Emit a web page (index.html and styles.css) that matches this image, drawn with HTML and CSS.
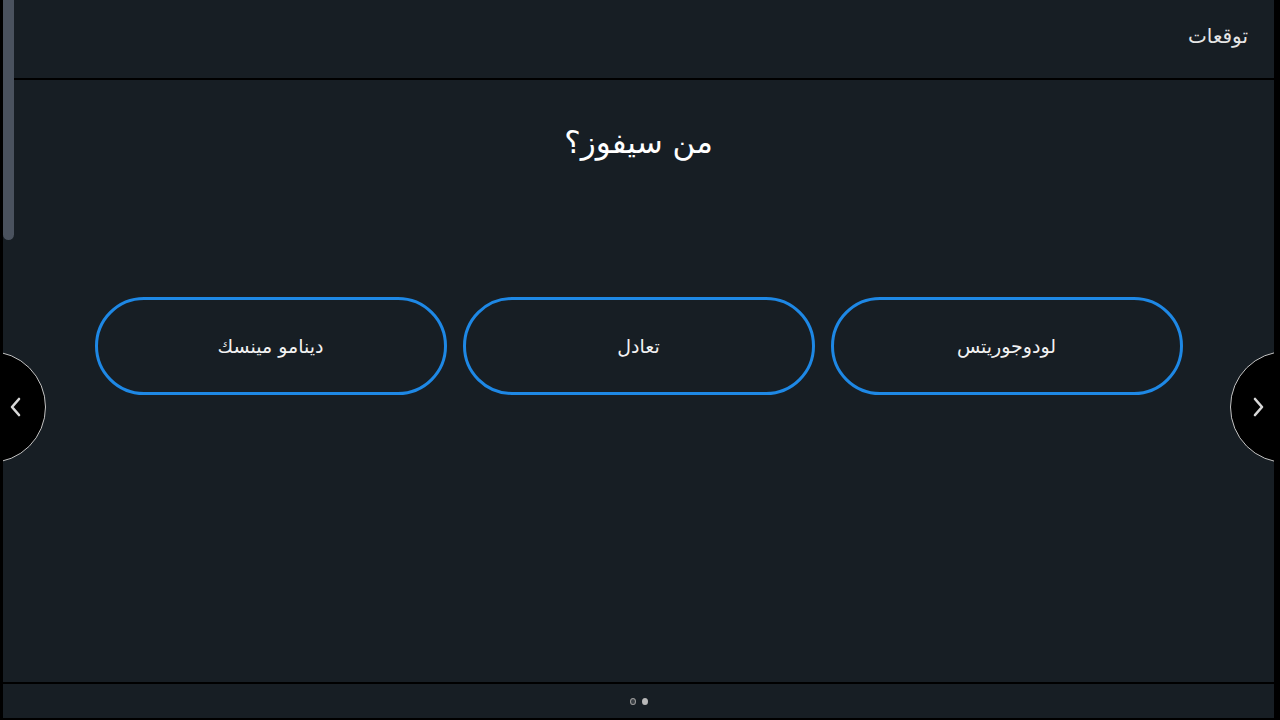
FILE: index.html
```
<!DOCTYPE html>
<html lang="ar" dir="rtl">
    <head>
    <title>توقعات</title>
    <meta charset="UTF-8">
    <meta name="viewport" content="width=device-width, initial-scale=1.0">
    <link rel="stylesheet" href="styles.css">
    </head>

    <body>
        <div class="pantalla">
            <div class="barra-scroll"></div>

            <div class="cabecera">
                <span class="titulo">توقعات</span>
            </div>

            <div class="contenido">
                <h1 class="pregunta">من سيفوز؟</h1>
                <div class="opciones">
                    <button class="opcion">لودوجوريتس</button>
                    <button class="opcion">تعادل</button>
                    <button class="opcion">دينامو مينسك</button>
                </div>
            </div>

            <div class="pie">
                <span class="punto punto-hueco"></span>
                <span class="punto"></span>
            </div>

            <button class="flecha flecha-izq">
                <svg width="14" height="22" viewBox="0 0 14 22"><path d="M11 3 L4 11 L11 19" fill="none" stroke="#d8d8d8" stroke-width="2.6" stroke-linecap="round" stroke-linejoin="round"/></svg>
            </button>
            <button class="flecha flecha-der">
                <svg width="14" height="22" viewBox="0 0 14 22"><path d="M3 3 L10 11 L3 19" fill="none" stroke="#d8d8d8" stroke-width="2.6" stroke-linecap="round" stroke-linejoin="round"/></svg>
            </button>
        </div>
    </body>
</html>
```

FILE: styles.css
```
html, body{
    margin: 0;
    height: 100%;
}

body{
    background-color: #000;
    padding: 0 6px 2px 3px;
    box-sizing: border-box;
    font-family: "DejaVu Sans", sans-serif;
}

.pantalla{
    position: relative;
    height: 100%;
    display: flex;
    flex-direction: column;
    background-color: #171e24;
    overflow: hidden;
}

.barra-scroll{
    position: absolute;
    left: 0;
    top: 0;
    width: 11px;
    height: 240px;
    background-color: #4a525e;
    border-radius: 0 0 6px 6px;
}

.cabecera{
    height: 80px;
    border-bottom: 2px solid #000;
    display: flex;
    align-items: center;
    padding-right: 26px;
    padding-bottom: 6px;
    box-sizing: border-box;
}

.titulo{
    color: #e6e6e6;
    font-size: 20px;
}

.contenido{
    flex: 1;
    display: flex;
    flex-direction: column;
    align-items: center;
}

.pregunta{
    margin: 44px 0 0;
    color: #fff;
    font-size: 31px;
    font-weight: normal;
}

.opciones{
    display: flex;
    gap: 16px;
    margin-top: 137px;
}

.opcion{
    width: 352px;
    height: 98px;
    border: 3px solid #1e88e5;
    border-radius: 49px;
    background-color: transparent;
    color: #f2f2f2;
    font-family: "DejaVu Sans", sans-serif;
    font-size: 19px;
}

.pie{
    height: 34px;
    border-top: 2px solid #000;
    display: flex;
    justify-content: center;
    align-items: center;
    gap: 6px;
    direction: ltr;
}

.punto{
    width: 6px;
    height: 7px;
    border-radius: 50%;
    background-color: #b8b8b8;
}

.punto-hueco{
    background-color: #3a3f44;
    border: 1.5px solid #9a9a9a;
    width: 4px;
    height: 5px;
}

.flecha{
    position: absolute;
    top: 351px;
    width: 112px;
    height: 112px;
    border-radius: 50%;
    background-color: #000;
    border: 1.5px solid #c4c4c4;
    display: flex;
    align-items: center;
    padding: 0;
    direction: ltr;
}

.flecha-izq{
    left: -69px;
    justify-content: flex-end;
    padding-right: 23px;
}

.flecha-der{
    right: -68px;
    justify-content: flex-start;
    padding-left: 21px;
}
```
